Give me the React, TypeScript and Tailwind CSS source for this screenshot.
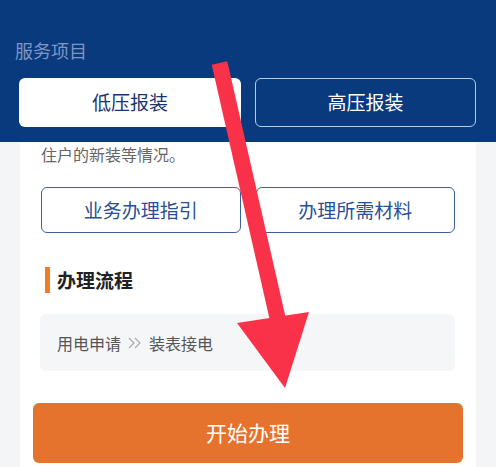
const font = { fontFamily: '"Noto Sans CJK SC", "Noto Sans", sans-serif' };

export default function App() {
  return (
    <div
      className="relative w-[496px] h-[467px] overflow-hidden bg-[#f4f5f7]"
      style={font}
    >
      {/* 顶部蓝色区域 */}
      <div className="bg-[#0a3a7e] h-[142px] px-[19px] pt-[37px]">
        <div className="text-[18px] leading-[26px] text-[#7f96c2] -ml-[4px]">服务项目</div>
        <div className="mt-[15px] flex gap-[14px]">
          <div className="w-[222px] h-[49px] rounded-[6px] bg-white flex items-center justify-center text-[19px] text-[#17366f]">
            低压报装
          </div>
          <div className="w-[221px] h-[49px] rounded-[6px] border border-[#b8cbea] flex items-center justify-center text-[19px] text-white">
            高压报装
          </div>
        </div>
      </div>

      {/* 内容卡片 */}
      <div className="mx-[20px] bg-white px-[13px] pb-[10px]">
        <div className="px-[8px] text-[16px] leading-[24px] text-[#666]">住户的新装等情况。</div>

        <div className="mt-[21px] px-[8px] flex gap-[15px]">
          <div className="flex-1 h-[46px] rounded-[6px] border border-[#3d5f9d] flex items-center justify-center text-[19px] text-[#2a4f93]">
            业务办理指引
          </div>
          <div className="flex-1 h-[46px] rounded-[6px] border border-[#3d5f9d] flex items-center justify-center text-[19px] text-[#2a4f93]">
            办理所需材料
          </div>
        </div>

        <div className="mt-[34px] px-[12px] flex items-center h-[26px] gap-[7px]">
          <div className="w-[5px] h-[26px] bg-[#f47a24]" />
          <div className="text-[19px] font-bold text-[#222]">办理流程</div>
        </div>

        <div className="mt-[21px] mx-[7px] mr-[8px] h-[57px] rounded-[6px] bg-[#f5f6f8] flex items-center pl-[17px] text-[16px] text-[#555]">
          <span>用电申请</span>
          <svg className="mx-[7px]" width="14" height="12" viewBox="0 0 14 12" fill="none" stroke="#aaa" strokeWidth="1.2">
            <path d="M1 1l5 5-5 5" />
            <path d="M7 1l5 5-5 5" />
          </svg>
          <span>装表接电</span>
        </div>

        <div className="mt-[32px] h-[60px] rounded-[6px] bg-[#e5732e] flex items-center justify-center text-[21px] text-white">
          开始办理
        </div>
      </div>

      {/* 红色箭头 */}
      <svg className="absolute inset-0" width="496" height="467" viewBox="0 0 496 467">
        <line x1="219.5" y1="63" x2="278" y2="320" stroke="#f9324a" strokeWidth="16" />
        <polygon points="237,323 309,312 285,388" fill="#f9324a" />
      </svg>
    </div>
  );
}
